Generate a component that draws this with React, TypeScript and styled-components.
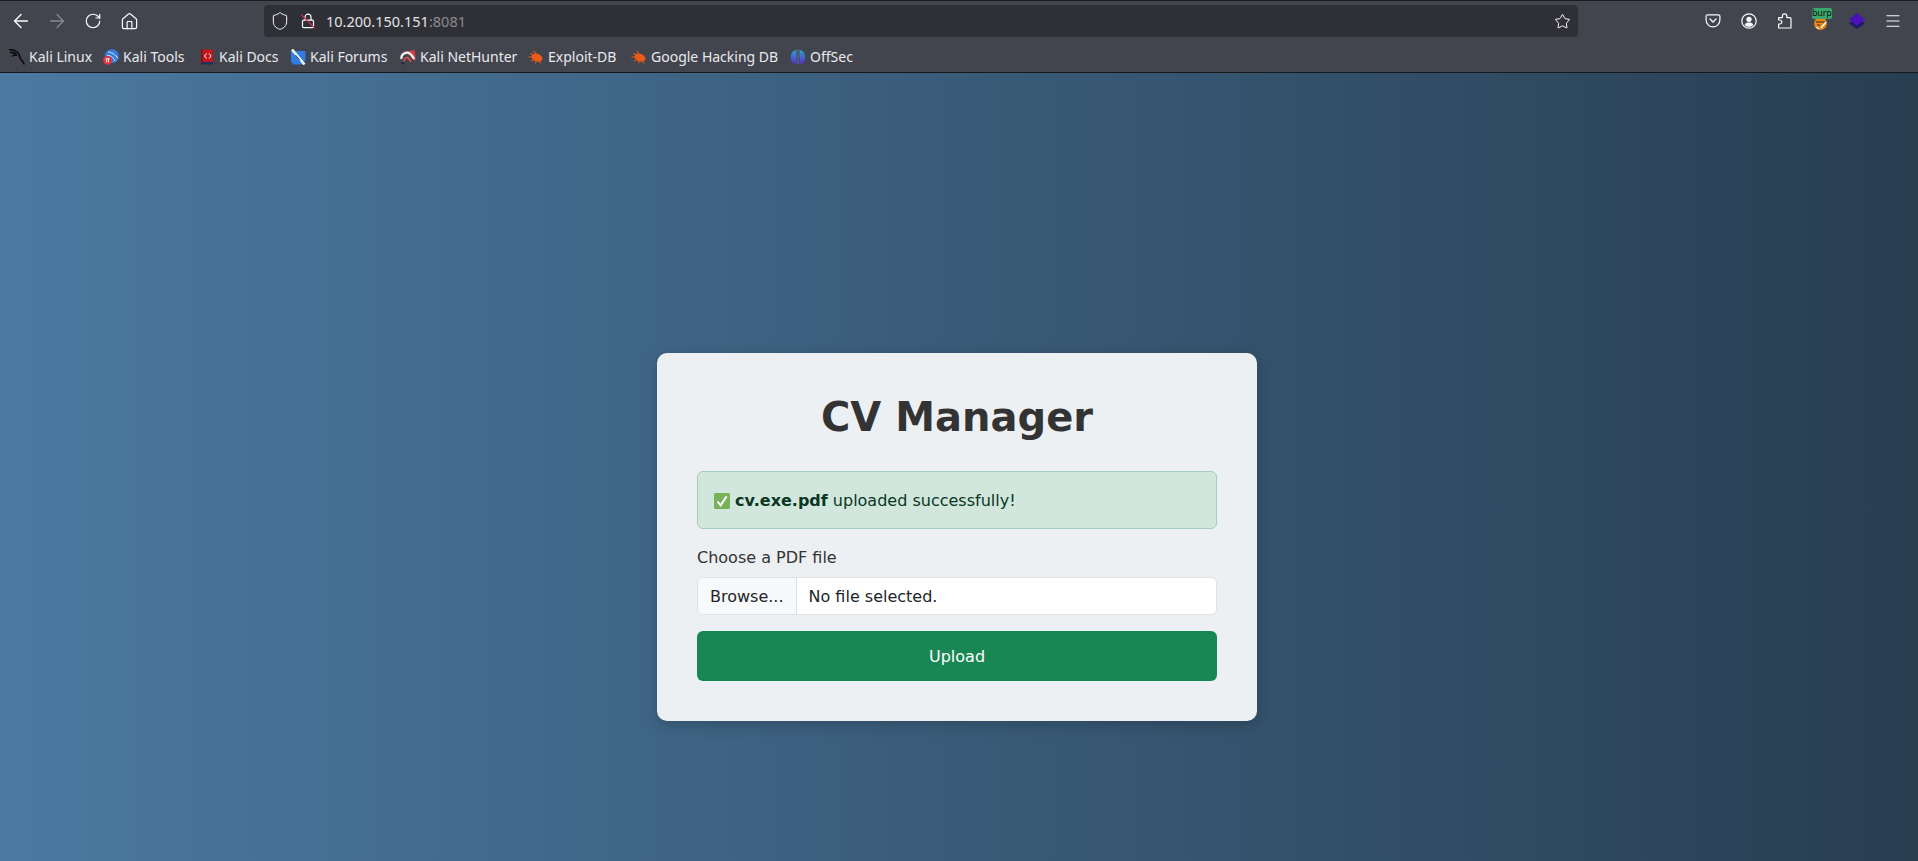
import React from 'react';
import styled, { createGlobalStyle } from 'styled-components';
import { ArrowLeft, ArrowRight, RotateCw, Home, Shield, Star, Menu } from 'lucide-react';

const GlobalStyle = createGlobalStyle`
  html, body {
    margin: 0;
    padding: 0;
    height: 100%;
    overflow: hidden;
  }
  #root {
    height: 100%;
  }
  * {
    box-sizing: border-box;
  }
`;

const LockOff = () => (
  <svg width="16" height="16" viewBox="0 0 16 16" fill="none">
    <rect x="2.5" y="7.2" width="11" height="7.4" rx="1.2" stroke="#fbfbfe" strokeWidth="1.2" />
    <path d="M5 7.2V4.2a3 3 0 0 1 6 0v3" stroke="#fbfbfe" strokeWidth="1.2" />
    <path d="M1 1.6 15 15.4" stroke="#e22850" strokeWidth="1.2" />
  </svg>
);

const KaliIcon = () => (
  <svg width="16" height="16" viewBox="0 0 16 16" fill="none">
    <path
      d="M0.5 0.8C3.5 0.5 6.5 1.5 8.5 3.2C10.5 5 10.5 6.5 11 8.5C11.5 10.5 13.5 11.5 15 15M1.5 3.6C4 3 6.5 4.2 7.5 6.2C6 6 4.5 6.2 3.5 7"
      stroke="#08080a"
      strokeWidth="1.5"
      strokeLinecap="round"
    />
  </svg>
);

const ToolsIcon = () => (
  <svg width="16" height="16" viewBox="0 0 16 16" fill="none">
    <circle cx="8.8" cy="7.2" r="7" fill="#367bdc" />
    <path d="M5 3C8 3 12.5 5.5 15 9.5M4 6.5C7 6 10.5 7.8 12 12" stroke="#dbe8fa" strokeWidth="1" />
    <circle cx="4.6" cy="11.4" r="4.4" fill="#e8333a" />
    <path d="M2.6 9.8h4M3.7 9.8v3.6M5.5 9.8v3.6" stroke="#fff" strokeWidth="0.9" />
  </svg>
);

const DocsIcon = () => (
  <svg width="16" height="16" viewBox="0 0 16 16" fill="none">
    <rect x="2" y="0.5" width="12" height="13.5" rx="1" fill="#c3161c" />
    <rect x="2" y="13" width="12" height="2.5" fill="#16345f" />
    <rect x="2" y="0.5" width="1.6" height="15" fill="#7a1418" />
    <path d="M7.5 4.5 5.5 7l2 2.5M10 4.5l2 2.5-2 2.5" stroke="#fff" strokeWidth="1" />
  </svg>
);

const ForumsIcon = () => (
  <svg width="16" height="16" viewBox="0 0 16 16" fill="none">
    <path d="M1 2h14.5v9l-4 4.5H3l-2-3z" fill="#2f7de1" />
    <path d="M2 0.5 12 12.5l2.5 3" stroke="#f3f6fa" strokeWidth="2.6" />
    <path d="M5.5 6 10 11.5" stroke="#20262e" strokeWidth="0.9" />
  </svg>
);

const HunterIcon = () => (
  <svg width="16" height="16" viewBox="0 0 16 16" fill="none">
    <path d="M3 3 14.5 1 16 12 9 6z" fill="#dd3b3f" />
    <path d="M1.5 10A5.5 5.5 0 0 1 11 5.5l3.2 4.5" stroke="#f2f2f2" strokeWidth="2.2" />
    <path d="M4.2 12.5A3 3 0 0 1 8 8.8l3 4" stroke="#e34b4b" strokeWidth="1.6" />
    <path d="M1.5 13.5 4.5 15.2" stroke="#20262e" strokeWidth="1.5" />
  </svg>
);

const BugIcon = () => (
  <svg width="16" height="16" viewBox="0 0 16 16" fill="none">
    <ellipse cx="9" cy="8.6" rx="5.6" ry="3.8" fill="#ea5b17" transform="rotate(20 9 8.6)" />
    <path d="M0.5 8h6M2.5 4.5 7 7M3 12l4-2M11.5 12.5l1.5 2M8 12 7.5 14.5M5.5 2 9 6" stroke="#ea5b17" strokeWidth="1.1" />
  </svg>
);

const OffSecIcon = () => (
  <svg width="16" height="16" viewBox="0 0 16 16" fill="none">
    <defs>
      <linearGradient id="offsec-grad" x1="0" y1="0" x2="0" y2="1">
        <stop offset="0" stopColor="#27a6c9" />
        <stop offset="1" stopColor="#5b2bd6" />
      </linearGradient>
    </defs>
    <path d="M6.5 0.8v14.4A7.4 7.4 0 0 1 6.5 0.8zM9.5 0.8a7.4 7.4 0 0 1 0 14.4z" fill="url(#offsec-grad)" />
    <path d="M8 0.5v15" stroke="#5f6f9a" strokeWidth="1" />
  </svg>
);

const PocketIcon = () => (
  <svg width="16" height="16" viewBox="0 0 16 16" fill="none">
    <path
      d="M2.5 1.8h11c.8 0 1.4.6 1.4 1.4V7a6.9 6.9 0 0 1-13.8 0V3.2c0-.8.6-1.4 1.4-1.4z"
      stroke="#fbfbfe"
      strokeWidth="1.2"
    />
    <path d="M5 6l3 3 3-3" stroke="#fbfbfe" strokeWidth="1.3" strokeLinecap="round" />
  </svg>
);

const AccountIcon = () => (
  <svg width="16" height="16" viewBox="0 0 16 16" fill="none">
    <circle cx="8" cy="8" r="7.2" stroke="#fbfbfe" strokeWidth="1.2" />
    <circle cx="8" cy="6.3" r="2.6" fill="#fbfbfe" />
    <path d="M3.6 12c.8-1.8 2.4-2.4 4.4-2.4s3.6.6 4.4 2.4c-1 1.2-2.6 1.8-4.4 1.8S4.6 13.2 3.6 12z" fill="#fbfbfe" />
  </svg>
);

const PuzzleIcon = () => (
  <svg width="16" height="16" viewBox="0 0 16 16" fill="none">
    <path
      d="M1.6 15V11h1.2a2 2 0 0 0 0-4H1.6V4.6h3.8V3a2.2 2.2 0 0 1 4.4 0v1.6h3.2a1 1 0 0 1 1 1V15z"
      stroke="#fbfbfe"
      strokeWidth="1.2"
      strokeLinejoin="round"
    />
  </svg>
);

const BurpIcon = () => (
  <svg width="20" height="22" viewBox="0 0 20 22" fill="none">
    <circle cx="9.5" cy="13.5" r="6.5" fill="#e8861a" />
    <path d="M5 12h9M6 15h3" stroke="#3a2a14" strokeWidth="1.1" />
    <path d="M10 18l5-6" stroke="#fff" strokeWidth="1.4" />
    <path d="M5 17l3 2" stroke="#f4e6d2" strokeWidth="1.2" />
  </svg>
);

const LayersIcon = () => (
  <svg width="16" height="16" viewBox="0 0 16 16" fill="none">
    <path d="M8 4.5 16 10.5 8 16 0 10.5z" fill="#231a6e" />
    <path d="M8 0 16 6.5 8 12.5 0 6.5z" fill="#4a12b8" />
  </svg>
);

const CheckEmoji = () => (
  <CheckSvg width="16" height="16" viewBox="0 0 16 16" fill="none">
    <rect width="16" height="16" rx="1.6" fill="#78b159" />
    <path d="M3.5 8.5 6.6 12.4 12.6 3.4" stroke="#fff" strokeWidth="2" />
  </CheckSvg>
);

const bookmarks = [
  { label: 'Kali Linux', icon: <KaliIcon />, width: 94 },
  { label: 'Kali Tools', icon: <ToolsIcon />, width: 96 },
  { label: 'Kali Docs', icon: <DocsIcon />, width: 91 },
  { label: 'Kali Forums', icon: <ForumsIcon />, width: 110 },
  { label: 'Kali NetHunter', icon: <HunterIcon />, width: 128 },
  { label: 'Exploit-DB', icon: <BugIcon />, width: 103 },
  { label: 'Google Hacking DB', icon: <BugIcon />, width: 159 },
  { label: 'OffSec', icon: <OffSecIcon />, width: 70 },
];

export default function App() {
  return (
    <>
      <GlobalStyle />
      <Window>
        <Toolbar>
          <NavGroup>
            <NavButton>
              <ArrowLeft size={22} color="#fbfbfe" strokeWidth={1.5} />
            </NavButton>
            <NavButton>
              <ArrowRight size={22} color="#85868b" strokeWidth={1.5} />
            </NavButton>
            <NavButton>
              <RotateCw size={18} color="#fbfbfe" strokeWidth={1.6} />
            </NavButton>
            <NavButton>
              <Home size={19} color="#fbfbfe" strokeWidth={1.5} />
            </NavButton>
          </NavGroup>
          <UrlBar>
            <UrlIcon>
              <Shield size={20} color="#fbfbfe" strokeWidth={1.2} />
            </UrlIcon>
            <UrlIcon>
              <LockOff />
            </UrlIcon>
            <UrlText>
              10.200.150.151<UrlPort>:8081</UrlPort>
            </UrlText>
            <Star size={17} color="#fbfbfe" strokeWidth={1.4} />
          </UrlBar>
          <ActionGroup>
            <ActionButton><PocketIcon /></ActionButton>
            <ActionButton><AccountIcon /></ActionButton>
            <ActionButton><PuzzleIcon /></ActionButton>
            <ActionButton>
              <BurpIcon />
              <BurpBadge>burp</BurpBadge>
            </ActionButton>
            <ActionButton><LayersIcon /></ActionButton>
            <ActionButton><Menu size={18} color="#fbfbfe" strokeWidth={1.6} /></ActionButton>
          </ActionGroup>
        </Toolbar>
        <BookmarksBar>
          {bookmarks.map((b) => (
            <Bookmark key={b.label} $width={b.width}>
              {b.icon}
              <span>{b.label}</span>
            </Bookmark>
          ))}
        </BookmarksBar>
        <Page>
          <Card>
            <Title>CV Manager</Title>
            <Alert>
              <CheckEmoji /> <strong>cv.exe.pdf</strong> uploaded successfully!
            </Alert>
            <Label>Choose a PDF file</Label>
            <FileInput>
              <BrowseButton>Browse...</BrowseButton>
              <FileName>No file selected.</FileName>
            </FileInput>
            <UploadButton>Upload</UploadButton>
          </Card>
        </Page>
      </Window>
    </>
  );
}

const Window = styled.div`
  height: 100%;
  display: flex;
  flex-direction: column;
  font-family: 'DejaVu Sans', sans-serif;
`;

const Toolbar = styled.div`
  height: 41px;
  flex: none;
  display: flex;
  align-items: center;
  background: #42454e;
  border-top: 1px solid #1c1c20;
  padding-left: 5px;
`;

const NavGroup = styled.div`
  display: flex;
  gap: 4px;
  width: 259px;
`;

const NavButton = styled.div`
  width: 32px;
  height: 32px;
  display: flex;
  align-items: center;
  justify-content: center;
`;

const UrlBar = styled.div`
  width: 1314px;
  height: 32px;
  display: flex;
  align-items: center;
  padding: 0 7px 0 4px;
  background: #2f3036;
  border-radius: 4px;
`;

const UrlIcon = styled.div`
  width: 24px;
  height: 20px;
  display: flex;
  align-items: center;
  justify-content: center;
  margin-right: 4px;
`;

const UrlText = styled.div`
  flex: 1;
  padding-left: 2px;
  font-family: 'Noto Sans', sans-serif;
  font-size: 14.5px;
  color: #e4e4e7;
`;

const UrlPort = styled.span`
  color: #8b8c90;
`;

const ActionGroup = styled.div`
  display: flex;
  margin-left: 117px;
`;

const ActionButton = styled.div`
  position: relative;
  width: 36px;
  height: 32px;
  display: flex;
  align-items: center;
  justify-content: center;
`;

const BurpBadge = styled.span`
  position: absolute;
  top: 3px;
  left: 9px;
  width: 20px;
  height: 11px;
  border-radius: 2px;
  background: #3aa76d;
  color: #101010;
  font-family: 'Noto Sans', sans-serif;
  font-size: 9px;
  letter-spacing: -0.2px;
  line-height: 10px;
  white-space: nowrap;
`;

const BookmarksBar = styled.div`
  height: 32px;
  flex: none;
  display: flex;
  align-items: center;
  padding-left: 9px;
  background: #42454e;
  border-bottom: 1px solid #16181c;
`;

const Bookmark = styled.div<{ $width: number }>`
  width: ${(props) => props.$width}px;
  flex: none;
  display: flex;
  align-items: center;
  gap: 4px;
  font-family: 'Noto Sans', sans-serif;
  font-size: 14px;
  color: #e9e9ec;
  white-space: nowrap;
`;

const Page = styled.div`
  flex: 1;
  padding: 280px 4px 0 0;
  display: flex;
  justify-content: center;
  align-items: flex-start;
  background: linear-gradient(to right, #4b79a1, #283e51);
`;

const Card = styled.div`
  width: 600px;
  padding: 40px;
  background: #ecf0f3;
  border-radius: 10px;
  box-shadow: 0 4px 15px rgba(0, 0, 0, 0.2);
`;

const Title = styled.h1`
  margin: 0 0 30px;
  font-size: 40px;
  line-height: 48px;
  font-weight: 700;
  text-align: center;
  color: #333;
`;

const Alert = styled.div`
  height: 58px;
  padding: 17px 16px 15px;
  margin-bottom: 16px;
  font-size: 16px;
  line-height: 24px;
  color: #0a3622;
  background: #d1e7dd;
  border: 1px solid #a3cfbb;
  border-radius: 6px;
`;

const CheckSvg = styled.svg`
  vertical-align: -3px;
`;

const Label = styled.div`
  padding-top: 1px;
  margin-bottom: 7px;
  font-size: 16px;
  line-height: 24px;
  color: #333;
`;

const FileInput = styled.div`
  height: 38px;
  margin-bottom: 16px;
  display: flex;
  overflow: hidden;
  background: #fff;
  border: 1px solid #dee2e6;
  border-radius: 6px;
  font-size: 16px;
  line-height: 24px;
  color: #212529;
`;

const BrowseButton = styled.div`
  padding: 7px 12px 5px;
  background: #f8f9fa;
  border-right: 1px solid #dee2e6;
`;

const FileName = styled.div`
  padding: 7px 12px 5px;
`;

const UploadButton = styled.button`
  display: block;
  width: 100%;
  height: 50px;
  padding: 0;
  font-family: inherit;
  font-size: 16px;
  color: #fff;
  background: #198754;
  border: none;
  border-radius: 6px;
`;
